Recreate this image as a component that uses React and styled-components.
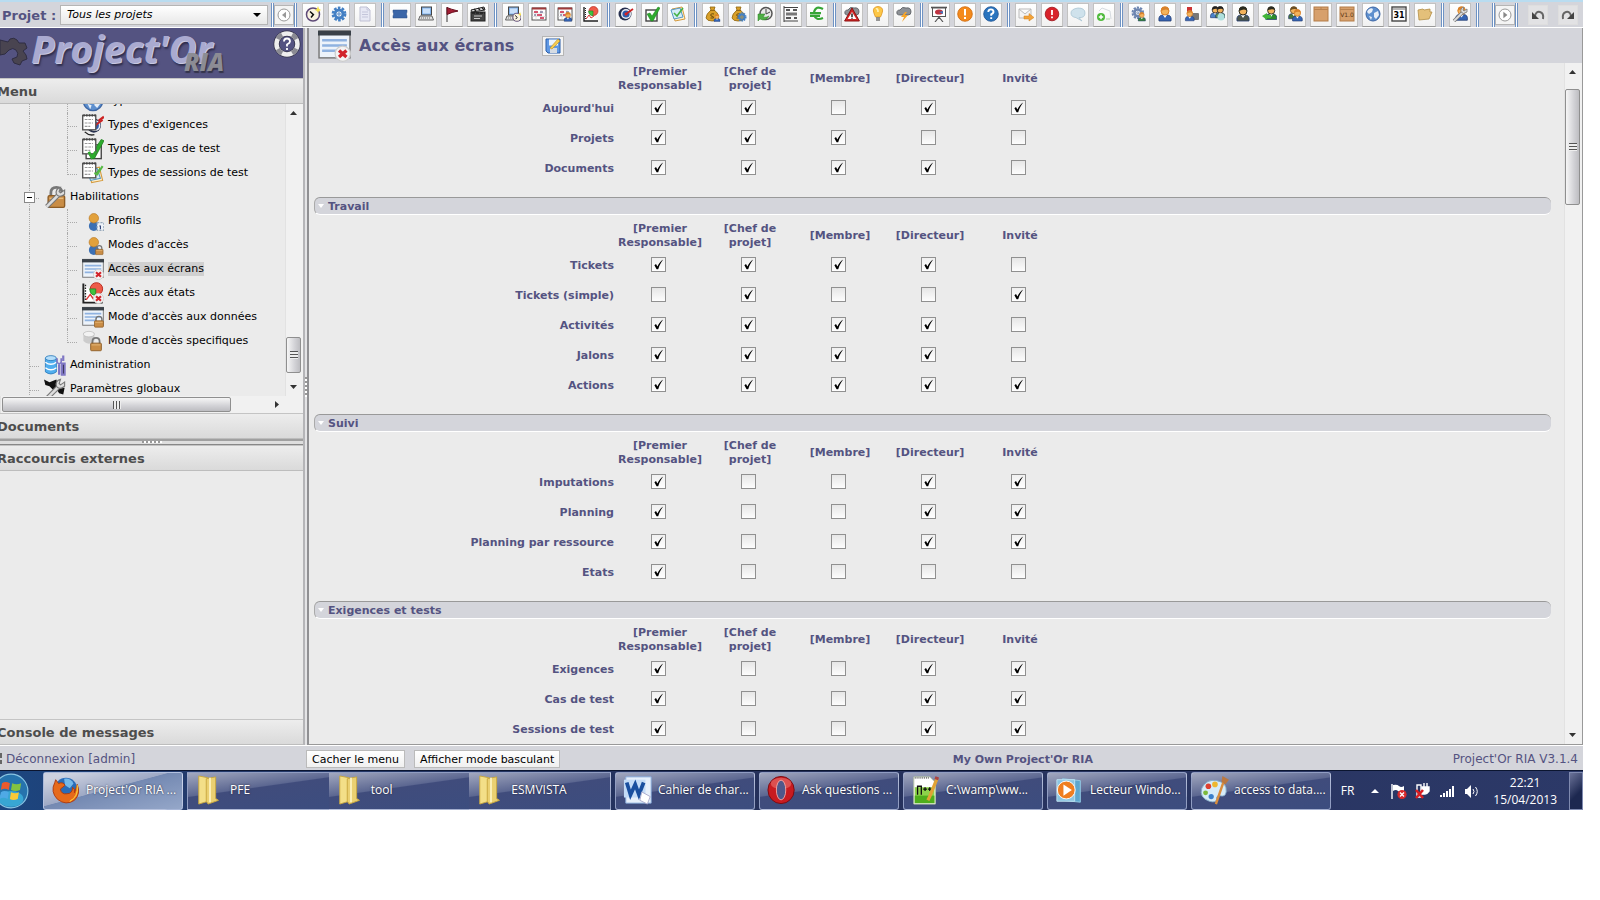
import { useState } from "react";
import styled, { createGlobalStyle } from "styled-components";

const GlobalStyle = createGlobalStyle`
  * {
    box-sizing: border-box;
  }
  body {
    margin: 0;
    background: #fff;
    font-family: Verdana, "DejaVu Sans", sans-serif;
    font-size: 11px;
    color: #000;
  }
  button, select {
    font-family: inherit;
    font-size: inherit;
  }
`;

const Screen = styled.div`
  display: flex;
  flex-direction: column;
  height: calc(100vh - 90px);
  margin-right: 17px;
  background: #d4d5db;
  overflow: hidden;
`;

/* top toolbar */

const Toolbar = styled.header`
  display: flex;
  align-items: center;
  flex: 0 0 28px;
  padding: 0 5px 0 2px;
  border-top: 2px solid #b9dcf0;
  border-bottom: 1px solid #fff;
`;

const ProjectLabel = styled.label`
  width: 58px;
  padding-top: 2px;
  font-size: 13px;
  font-weight: bold;
  color: #545381;
  white-space: nowrap;
`;

const SelectBox = styled.div`
  position: relative;
  width: 208px;
  margin-right: 3px;

  &::after {
    content: "";
    position: absolute;
    right: 7px;
    top: 8px;
    border: 4px solid transparent;
    border-top-color: #000;
    pointer-events: none;
  }
`;

const ProjectSelect = styled.select`
  display: block;
  width: 100%;
  height: 20px;
  padding: 0 6px;
  appearance: none;
  border: 1px solid #b5b5b5;
  border-radius: 0;
  background: linear-gradient(#fff, #e8e8e8);
  font-style: italic;
  color: #000;
`;

const Separator = styled.span`
  flex: 0 0 3px;
  height: 24px;
  margin: 0 ${(props) => (props.$tight ? "0" : "5px")};
  border-left: 1px solid #6f93c4;
  border-right: 1px solid #6f93c4;
  background: #fff;
`;

const ToolGroup = styled.div`
  display: flex;
  gap: 4px;
`;

const ToolButton = styled.button`
  display: flex;
  align-items: flex-start;
  flex: 0 0 22px;
  height: 24px;
  padding: 2px;
  border: 1px solid #c2c2c2;
  border-bottom-color: #999;
  background: linear-gradient(#fff, #f1f1f1);
`;

const SmallButton = styled(ToolButton)`
  flex-basis: ${(props) => (props.$wide ? "22px" : "20px")};
  height: 20px;
  padding: 1px;
  border-color: ${(props) => (props.$flat ? "#dedede" : "#b5b5b5")};
  background: ${(props) => (props.$flat ? "#e2e2e4" : "#f4f4f4")};
  justify-content: center;
`;

const Spacer = styled.span`
  flex: ${(props) => (props.$width ? `0 0 ${props.$width}px` : "1")};
`;

/* body */

const Body = styled.div`
  display: flex;
  flex: 1;
  min-height: 0;
`;

const Side = styled.aside`
  display: flex;
  flex-direction: column;
  flex: 0 0 303px;
  min-height: 0;
  background: #ebebeb;
`;

const Logo = styled.div`
  position: relative;
  display: flex;
  align-items: center;
  flex: 0 0 50px;
  background: #545381;
  overflow: hidden;
`;

const LogoName = styled.span`
  margin: 0 0 10px 3px;
  font-family: "Open Sans", sans-serif;
  font-size: 38px;
  font-weight: 700;
  font-style: italic;
  line-height: 40px;
  color: #aaaad0;
  text-shadow: 1px 1px 0 #c8c8e2, 2px 3px 2px #2e2d4c;
`;

const LogoSuffix = styled.span`
  position: absolute;
  left: 184px;
  top: 22px;
  font-family: "Open Sans", sans-serif;
  font-size: 24px;
  font-weight: 800;
  line-height: 24px;
  color: #8c8c94;
  font-style: italic;
  text-shadow: 1px 2px 1px #34344a;
`;

const HelpButton = styled.button`
  position: absolute;
  right: 2px;
  top: 2px;
  padding: 0;
  border: 0;
  background: none;
`;

const PaneTitle = styled.button`
  flex: 0 0 26px;
  padding: 0;
  border: 0;
  border-top: 1px solid #c4c4c4;
  border-bottom: 1px solid #bdbdbd;
  background: linear-gradient(#ededed, #dadada);
  font-size: 13px;
  font-weight: bold;
  color: #4d4d4d;
  text-align: left;
  text-indent: -3px;
  overflow: hidden;
`;

const PaneSplitter = styled.div`
  flex: 0 0 6px;
  border-top: 2px solid #a0a0a0;
  border-bottom: 1px solid #888;
  background: #dedede;

  &::before {
    content: "";
    display: block;
    width: 20px;
    height: 2px;
    margin: 0 auto;
    background: repeating-linear-gradient(90deg, #999 0 2px, #fff 2px 4px);
  }
`;

const EmptyPane = styled.div`
  flex: 1;
`;

const TreePane = styled.nav`
  display: flex;
  flex: 0 0 292px;
  overflow: hidden;
`;

const TreeView = styled.div`
  flex: 1;
  overflow: hidden;
`;

const TreeList = styled.ul`
  margin: -15px 0 0;
  padding: 0 0 0 29px;
  list-style: none;
`;

const TreeRow = styled.li`
  display: flex;
  align-items: center;
  height: 24px;
  white-space: nowrap;

  svg {
    flex: none;
    margin-right: 4px;
  }
`;

const Guide = styled.span`
  flex: 0 0 38px;
  align-self: stretch;
  border-left: 1px dotted #aaa;
`;

const Branch = styled.span`
  position: relative;
  flex: 0 0 15px;
  align-self: stretch;

  &::before {
    content: "";
    position: absolute;
    left: 0;
    top: 0;
    height: ${(props) => (props.$last ? "50%" : "100%")};
    border-left: 1px dotted #aaa;
  }
  &::after {
    content: "";
    position: absolute;
    left: 0;
    top: 13px;
    width: 10px;
    border-top: 1px dotted #aaa;
  }
`;

const Expander = styled.button`
  position: absolute;
  z-index: 1;
  left: -5px;
  top: 7px;
  width: 11px;
  height: 11px;
  padding: 0;
  border: 1px solid #888;
  background: linear-gradient(#000, #000) center / 5px 1px no-repeat, #fff;
`;

const TreeLink = styled.a`
  line-height: 14px;
  color: #000;
  text-decoration: none;
  background: ${(props) => (props.$selected ? "#d0d0d0" : "none")};
`;

const Scrollbar = styled.div`
  display: flex;
  flex-direction: ${(props) => (props.$across ? "row" : "column")};
  align-items: center;
  flex: 0 0 ${(props) => (props.$across ? "17px" : "18px")};
  padding-right: ${(props) => (props.$across ? "0" : "2px")};
  background: #f1f1f1;
  border-left: 1px solid #e2e2e2;
`;

const TrackGap = styled.span`
  flex: ${(props) => props.$grow};
`;

const Arrow = styled.span`
  flex: none;
  width: ${(props) => (props.$dir === "right" ? "4px" : "7px")};
  height: ${(props) => (props.$dir === "right" ? "7px" : "4px")};
  margin: ${(props) => (props.$dir === "right" ? "0 5px" : "7px 0")};
  background: #333;
  clip-path: ${(props) =>
    ({
      up: "polygon(0 100%, 50% 0, 100% 100%)",
      down: "polygon(0 0, 100% 0, 50% 100%)",
      right: "polygon(0 0, 100% 50%, 0 100%)",
    })[props.$dir]};
`;

const Thumb = styled.span`
  display: flex;
  align-items: center;
  justify-content: center;
  flex: 0 0 ${(props) => props.$size}px;
  width: 15px;
  height: 15px;
  border: 1px solid #8f8f8f;
  border-radius: 2px;
  background: linear-gradient(${(props) => (props.$across ? "180deg" : "90deg")}, #f6f6f6, #d2d2d6 60%, #bdbdc1);

  &::before {
    content: "";
    width: 8px;
    height: 8px;
    background: repeating-linear-gradient(${(props) => (props.$across ? "90deg" : "180deg")}, #555 0 1px, #eee 1px 3px);
  }
`;

const Gutter = styled.div`
  display: flex;
  align-items: center;
  justify-content: center;
  flex: 0 0 6px;
  border-left: 2px solid #b5b5b8;
  border-right: 2px solid #909093;
  background: #e4e4e6;

  &::before {
    content: "";
    width: 2px;
    height: 20px;
    background: repeating-linear-gradient(#999 0 2px, #fff 2px 4px);
  }
`;

const Main = styled.main`
  display: flex;
  flex-direction: column;
  flex: 1;
  min-width: 0;
  border-right: 1px solid #999;
  border-bottom: 1px solid #999;
  background: #ebebeb;
`;

const MainHeader = styled.div`
  display: flex;
  align-items: center;
  flex: 0 0 35px;
  padding-left: 9px;
  background: #d4d5db;
`;

const MainTitle = styled.h1`
  margin: 0 28px 0 8px;
  font-size: 16px;
  font-weight: bold;
  color: #545381;
`;

const MainScroll = styled.div`
  display: flex;
  flex: 1;
  min-height: 0;
`;

const Sections = styled.div`
  flex: 1;
  padding: 2px 13px 0 5px;
  overflow: hidden;
`;

const SectionBar = styled.h2`
  display: flex;
  align-items: center;
  gap: 4px;
  height: 18px;
  margin: 14px 0 7px;
  padding-left: 3px;
  border-top: 1px solid #999;
  border-left: 1px solid #aaa;
  border-bottom: 1px solid #fff;
  border-radius: 6px;
  background: #d4d5db;
  font-size: 11px;
  font-weight: bold;
  color: #545381;

  &::before {
    content: "";
    width: 6px;
    height: 4px;
    background: #fff;
    clip-path: polygon(0 0, 100% 0, 50% 100%);
  }
`;

const RightsTable = styled.table`
  table-layout: fixed;
  width: 751px;
  border-collapse: collapse;
  font-weight: bold;
  color: #545381;

  th, td {
    padding: 0;
  }
`;

const HeadCell = styled.th`
  width: ${(props) => (props.$label ? "301px" : "90px")};
  height: 28px;
  line-height: 14px;
  text-align: center;
`;

const RowHead = styled.th`
  height: 30px;
  text-align: right;

  && {
    padding-right: 1px;
  }
`;

const CheckCell = styled.td`
  text-align: center;
  line-height: 0;

  && {
    padding: 0 3px 2px 0;
  }
`;

const CheckBox = styled.input.attrs({ type: "checkbox" })`
  width: 15px;
  height: 15px;
  margin: 0;
  appearance: none;
  border: 1px solid #909090;
  background: linear-gradient(#e6e6e6, #fdfdfd);

  &:checked {
    background: url("data:image/svg+xml,%3Csvg xmlns='http://www.w3.org/2000/svg' viewBox='0 0 13 13'%3E%3Cpath d='M2.4 7.2L4 6L5.4 8.6C7 5.4 8.6 3.2 11.2 1.6C8.8 4.6 7.6 7.2 6.2 11.2H4.6Z' fill='%23000'/%3E%3C/svg%3E") center / 13px 13px no-repeat,
      linear-gradient(#f0f0f0, #fff);
  }
`;

/* status bar */

const StatusBar = styled.footer`
  display: grid;
  grid-template-columns: 306px 4fr auto 3fr;
  align-items: center;
  flex: 0 0 25px;
  padding: 2px 5px 0 0;
  border-top: 1px solid #fff;
  color: #545381;
`;

const LogoutLink = styled.a`
  display: flex;
  align-items: center;
  gap: 4px;
  color: #545381;
  font-size: 12px;
  text-decoration: none;
`;

const StatusButtons = styled.div`
  display: flex;
  gap: 9px;
`;

const StatusButton = styled.button`
  height: 18px;
  padding: 0 5px;
  border: 1px solid #bbb;
  background: linear-gradient(#fff, #f0f0f0);
  color: #000;
  white-space: nowrap;
`;

const Version = styled.span`
  font-size: 12px;
  text-align: right;
`;

/* windows taskbar */

const Taskbar = styled.div`
  display: flex;
  align-items: center;
  gap: 4px;
  flex: 0 0 40px;
  border-top: 1px solid #0b1530;
  background: linear-gradient(90deg, #1c4680, #233a6c 12%, #25305a 50%, #2c3968);
  font-family: "Open Sans", "Noto Sans", sans-serif;
  font-size: 12px;
  color: #fff;
`;

const StartButton = styled.button`
  flex: 0 0 39px;
  height: 38px;
  padding: 0;
  border: 0;
  background: none;
  overflow: hidden;

  svg {
    display: block;
    margin-left: -7px;
  }
`;

const TaskButton = styled.button`
  display: flex;
  align-items: center;
  gap: 5px;
  flex: 0 0 140px;
  height: 38px;
  padding: 0 0 2px 7px;
  border: 1px solid rgba(200, 212, 240, 0.6);
  border-radius: 3px;
  background: ${(props) =>
    props.$active
      ? "linear-gradient(165deg, #cdd2e0 10%, #9ea9c5 45%, #7489b2 46%, #95a7c9)"
      : "linear-gradient(172deg, #a2a8bf, #5c6791 42%, #404c7c 44%, #3c4d7f)"};
  color: #fff;
  white-space: nowrap;
  text-shadow: 0 0 2px #223;
`;

const FolderGroup = styled.div`
  display: flex;
  flex: 0 0 424px;
`;

const FolderButton = styled(TaskButton)`
  flex: 1;
  border-width: 1px 0;
  border-radius: 0;

  &:first-child {
    border-left-width: 1px;
  }
  &:last-child {
    border-right-width: 1px;
  }
`;

const Tray = styled.div`
  display: flex;
  align-items: center;
  flex: 1;
  justify-content: flex-end;
  gap: 9px;
`;

const Language = styled.span`
  margin-right: 7px;
`;

const Clock = styled.div`
  margin: 0 3px 0 4px;
  text-align: center;
  line-height: 17px;
`;

const ShowDesktop = styled.button`
  width: 14px;
  height: 38px;
  padding: 0;
  border: 1px solid #7f8ab0;
  background: linear-gradient(135deg, #6b7398, #1d2850 60%);
`;

/* icon parts, all drawn on a 16 unit square */

const Person = ({ x = 0, y = 0, s = 1, coat = "#3565b5", hair = "#d9822b", skin = "#f3b35c" }) => (
  <g transform={`translate(${x} ${y}) scale(${s})`}>
    <path d="M2 15Q1 9 6 9H10Q15 9 14 15Z" fill={coat} stroke="#233a70" strokeWidth=".8" />
    <path d="M6 9L8 12L10 9Z" fill="#fff" />
    <circle cx="8" cy="5" r="4" fill={skin} stroke={hair} />
    <path d="M4 5Q4 0 8 .5Q12 0 12 5Q10 2 4 5" fill={hair} />
  </g>
);

const Gear = ({ x = 0, y = 0, s = 1, color = "#4480c4" }) => (
  <g transform={`translate(${x} ${y}) scale(${s})`} fill="none" stroke={color}>
    <circle cx="8" cy="8" r="6.2" strokeWidth="2.4" strokeDasharray="2.6 1.3" />
    <circle cx="8" cy="8" r="4" strokeWidth="3" />
    <circle cx="8" cy="8" r="1.2" />
  </g>
);

const Lock = ({ x = 0, y = 0, s = 1 }) => (
  <g transform={`translate(${x} ${y}) scale(${s})`}>
    <path d="M4 8V5Q4 1 8 1T12 5V8" fill="none" stroke="#777" strokeWidth="2" />
    <rect x="2" y="7" width="12" height="8.5" rx="1" fill="#c98d46" stroke="#8c5c26" />
    <path d="M3 9H13" stroke="#e9bb7c" />
  </g>
);

const Wrench = () => (
  <>
    <path d="M2 15L11 6" stroke="#777" strokeWidth="3.4" />
    <path d="M2 15L11 6" stroke="#ddd" strokeWidth="1.8" />
    <path d="M12 1Q8 2 9 6Q11 9 15 6V3L12 5L11 4Z" fill="#ddd" stroke="#777" strokeWidth=".8" />
  </>
);

const Sheet = () => (
  <>
    <rect x=".5" y="1" width="9.5" height="10.5" fill="#fff" stroke="#555" />
    <path d="M1 1H10" stroke="#444" strokeWidth="1.6" strokeDasharray="1 1" />
    <path d="M2 4H8M2 6.5H8M2 9H6" stroke="#999" strokeWidth=".8" strokeDasharray="2 .6" />
  </>
);

const ScreenPane = () => (
  <>
    <rect x=".5" y="1" width="15" height="13" fill="#edf3fa" stroke="#777" strokeWidth=".7" />
    <path d="M0 2H16" stroke="#394048" strokeWidth="2.4" />
    <path d="M2 5.5H14M2 8H14M2 10.5H10" stroke="#8fb2e0" strokeWidth="1.2" />
  </>
);

const RedCross = () => (
  <>
    <circle cx="12" cy="12" r="3.7" fill="#f3f3f3" stroke="#ccc" strokeWidth=".6" />
    <path d="M10.2 10.4L13.8 13.6M13.8 10.4L10.2 13.6" stroke="#d2232a" strokeWidth="1.6" />
  </>
);

const Globe = () => (
  <>
    <circle cx="8" cy="8" r="7" fill="#5d8fce" stroke="#3d66a4" />
    <path d="M3 4Q6 1 8 3L7 6L4 8L2 6ZM9 7L13 5L14 9L11 13L9 11Z" fill="#e6eef8" />
    <path d="M4 10L7 11L6 14Z" fill="#e6eef8" />
  </>
);

const Report = () => (
  <>
    <path d="M1 1V15H15" stroke="#222" strokeWidth="1.4" fill="#fff" />
    <path d="M2.5 2V14" stroke="#222" strokeDasharray="1 1" />
    <path d="M3 13L6 9L8 12L11 10" stroke="#d33" fill="none" />
    <circle cx="10.5" cy="5" r="4.5" fill="#ee5b48" stroke="#b92c21" strokeWidth=".7" />
    <path d="M10 5H5.6Q6 10 10 9.5Z" fill="#40c340" stroke="#248424" strokeWidth=".6" />
  </>
);

const ClockFace = () => (
  <>
    <circle cx="8" cy="8.5" r="6.5" fill="#faf3df" stroke="#5e4a78" strokeWidth="1.5" />
    <path d="M5 5.5L8.4 8.6L6 11.5" stroke="#111" strokeWidth="1.5" fill="none" />
    <path d="M13 0L14 2.8L16 4L14 5L13 7L12 5L10 4L12 2.8Z" fill="#f6e24a" />
  </>
);

const MoneyBag = () => (
  <>
    <path d="M5 1H10L9 4Q15 8 13 13Q12 15 7 15T1 12Q1 8 6 4Z" fill="#d9a029" stroke="#8e6412" strokeWidth=".8" />
    <path d="M5 4.4H10" stroke="#8e6412" />
    <path d="M9 8Q5 7 6 10Q9 10 8.5 12L5.5 12" stroke="#6e4b0b" fill="none" />
  </>
);

const Computer = () => (
  <>
    <rect x="3.5" y="1" width="10" height="8" fill="#82b5ef" stroke="#444" />
    <rect x="5" y="2.5" width="7" height="5" fill="#c9e0fa" />
    <path d="M2 10H14L15.5 14H.5Z" fill="#ddd" stroke="#666" />
    <path d="M3 12H13" stroke="#777" strokeDasharray="1 1" />
  </>
);

const Cloud = () => (
  <path d="M4 9Q0 9 1 5.5Q2 3.5 4 4Q6 0 10 2Q15 1 15 6Q15 9 12 9Z" fill="#8d9196" stroke="#55595e" strokeWidth=".8" />
);

const PlanGrid = () => (
  <>
    <rect x="1" y="2" width="14" height="12" fill="#fff" stroke="#555" />
    <path d="M1 2.5H15" stroke="#a03a3a" strokeWidth="2" />
    <path d="M5 4V14M10 4V14M1 7H15M1 10.5H15" stroke="#ccc" strokeWidth=".6" />
    <path d="M3 6H7M6 9H11M9 12H13" stroke="#c24" strokeWidth="1.4" />
    <path d="M9 6H12M3 9H5" stroke="#447" strokeWidth="1.2" />
  </>
);

const Target = () => (
  <>
    <circle cx="7" cy="8" r="6.5" fill="#27304f" />
    <circle cx="8" cy="8" r="5" fill="#e9edf5" />
    <circle cx="8" cy="8" r="3.6" fill="#2d5cab" />
    <circle cx="8" cy="8" r="1.5" fill="#d22" />
    <path d="M8 8L15 3" stroke="#c22" strokeWidth="1.8" />
  </>
);

const GreenTick = () => (
  <path d="M3 8L6 7L8 10L14 1L16 2L9 15H7Z" fill="#2dab2d" stroke="#177a17" strokeWidth=".5" />
);

const Notes = () => (
  <>
    <path d="M2 3L12 1L15 13L5 15Z" fill="#fff1ce" stroke="#d39a3f" />
    <path d="M1 4L10 2L13 11L4 13Z" fill="#d4ecf8" stroke="#5799c4" />
    <path d="M4 7L7 10L13 2" stroke="#45b245" strokeWidth="1.6" fill="none" />
  </>
);

const ICONS = {
  today: <ClockFace />,
  project: <Gear />,
  document: (
    <>
      <path d="M3 1H10L13 4V15H3Z" fill="#e7e8f4" stroke="#bfc0d3" />
      <path d="M10 1V4H13M5 6H11M5 8.5H11M5 11H11" stroke="#c4c5da" fill="none" />
    </>
  ),
  ticket: <path d="M1 4H15V6Q13.6 8 15 10V12H1V10Q2.4 8 1 6Z" fill="#3b66a8" stroke="#2b4c84" strokeWidth=".5" />,
  activity: <Computer />,
  milestone: (
    <>
      <path d="M3 1V16" stroke="#555" strokeWidth="1.2" />
      <path d="M3 1.5Q6 3 14 5Q8 6 3 8.5Z" fill="#a31f35" stroke="#68101f" />
    </>
  ),
  action: (
    <>
      <rect x="1" y="6" width="14" height="9" fill="#444" stroke="#222" />
      <path d="M1 4L14 1L15 4L2 6Z" fill="#ddd" stroke="#222" />
      <path d="M4 3L6 5M8 2L10 4M12 1.6L14 4M2 7H15" stroke="#222" strokeWidth="1.4" strokeDasharray="3 1" />
      <path d="M4 10H12M4 12.5H10" stroke="#ccc" />
    </>
  ),
  work: (
    <>
      <Computer />
      <g transform="translate(7 6) scale(.62)">
        <ClockFace />
      </g>
    </>
  ),
  planning: <PlanGrid />,
  resourcePlanning: (
    <>
      <PlanGrid />
      <Person x={6} y={6} s={0.62} />
    </>
  ),
  report: <Report />,
  requirement: <Target />,
  testCase: (
    <>
      <rect x="2" y="4" width="11" height="11" fill="#fff" stroke="#444" strokeWidth="1.4" />
      <GreenTick />
    </>
  ),
  testSession: <Notes />,
  individualExpense: (
    <>
      <MoneyBag />
      <Person x={8} y={8} s={0.5} />
    </>
  ),
  projectExpense: (
    <>
      <MoneyBag />
      <Gear x={6} y={6} s={0.62} />
    </>
  ),
  term: (
    <>
      <circle cx="9" cy="7.5" r="6" fill="#e8e8e8" stroke="#555" strokeWidth="1.5" />
      <path d="M9 3V8L13 6" stroke="#444" fill="none" />
      <path d="M1 8H8L6 11Q9 12 12 10Q9 16 3 13L1 15Z" fill="#4fae45" stroke="#267e1e" strokeWidth=".5" />
    </>
  ),
  bill: (
    <>
      <path d="M1 0V16M1 1.5H15M1 15H15" stroke="#444" fill="none" />
      <path d="M3 4H7M10 4H14M3 12H8M11 12H14" stroke="#222" strokeWidth="1.6" />
      <path d="M3 8H14" stroke="#777" strokeWidth="3" />
    </>
  ),
  payment: (
    <path d="M14 3Q7 -1 5 6M5 9Q7 15 14 12M1 7.2H12M1 9.8H11" stroke="#35a535" strokeWidth="2.2" fill="none" />
  ),
  risk: (
    <>
      <Cloud />
      <path d="M8 2L15.4 15H.6Z" fill="#d02424" stroke="#8b1111" />
      <path d="M8 6L12.4 13H3.6Z" fill="#fff" />
      <path d="M8 7.5V11M8 11.7V12.8" stroke="#111" strokeWidth="1.4" />
    </>
  ),
  opportunity: (
    <>
      <path d="M8 .5Q13 1 12.6 5Q12 8 10.5 11H5.5Q4 8 3.4 5Q3 1 8 .5Z" fill="#fdc746" stroke="#dd9522" strokeWidth=".8" />
      <path d="M6 3Q8 2 8 6" stroke="#fff3b8" strokeWidth="1.6" fill="none" />
      <path d="M6 12H10M6 14H10" stroke="#777" strokeWidth="1.5" />
    </>
  ),
  issue: (
    <>
      <Cloud />
      <path d="M9 6L5 11H8L6 16L12 9H9L11 6Z" fill="#f7a529" />
    </>
  ),
  meeting: (
    <>
      <path d="M0 1.5H16" stroke="#555" strokeWidth="1.6" />
      <rect x="1.5" y="2" width="13" height="8.5" fill="#fff" stroke="#555" />
      <path d="M8 10V13M8 11L4 16M8 11L12 16" stroke="#555" strokeWidth="1.2" />
      <ellipse cx="8" cy="6" rx="4" ry="2.6" fill="#bf3340" />
      <path d="M8 6L12 5V8Z" fill="#4575bd" />
    </>
  ),
  decision: (
    <>
      <circle cx="8" cy="8" r="7.3" fill="#f48a1c" stroke="#cd6709" strokeWidth=".8" />
      <path d="M8 3V9.4M8 11V13" stroke="#fff" strokeWidth="2" />
    </>
  ),
  question: (
    <>
      <circle cx="8" cy="8" r="7.3" fill="#2974be" stroke="#1c5190" strokeWidth=".8" />
      <path d="M5.3 6Q5.5 3.2 8 3.4T10.5 6Q10.3 7.3 8.2 8.4V9.8M8.2 11.2V13" stroke="#fff" strokeWidth="1.9" fill="none" />
    </>
  ),
  mail: (
    <>
      <path d="M1 3H13V12H1ZL7 8L13 3" fill="#f4f4f4" stroke="#bbb" />
      <path d="M6 10H11V7.5L16 11.5L11 15V13H6Z" fill="#f2a33a" stroke="#d37f16" strokeWidth=".5" />
    </>
  ),
  alert: (
    <>
      <circle cx="8" cy="8" r="6.8" fill="#d8222b" stroke="#9c1017" strokeWidth=".8" />
      <path d="M8 4V9M8 10.4V12.2" stroke="#fff" strokeWidth="1.8" />
    </>
  ),
  message: (
    <path d="M8 2Q15 2 15 7T9 11.6L12 15L6 11.6Q1 11 1 7T8 2Z" fill="#cfe2ec" stroke="#a9c5d3" strokeWidth=".8" />
  ),
  importData: (
    <>
      <path d="M6 2L14 5M14 5L15 13M3 5L6 2" stroke="#d6dbe0" fill="none" />
      <circle cx="5" cy="11" r="4" fill="#4fba3c" />
      <path d="M5 8.8V13.2M2.8 11H7.2" stroke="#fff" strokeWidth="1.5" />
      <path d="M10 13H14" stroke="#a8d79f" />
    </>
  ),
  projectTeam: (
    <>
      <Gear color="#6c85b0" s={0.85} />
      <Person x={6} y={6} s={0.6} coat="#38823a" />
    </>
  ),
  user: <Person />,
  userJob: (
    <>
      <rect x="8" y="7" width="8" height="7" rx="1" fill="#777" />
      <path d="M4 1H9V6H4Z" fill="#c33" />
      <Person x={1} y={4} s={0.72} />
    </>
  ),
  contacts: (
    <>
      <Person s={0.78} hair="#222" coat="#4a82c8" />
      <Person x={5} s={0.78} hair="#222" coat="#5a8a5a" />
      <circle cx="12" cy="11" r="3.5" fill="#aee0de" />
    </>
  ),
  resource: <Person hair="#2b2b20" coat="#4b554b" />,
  affectation: (
    <>
      <Person x={3} s={0.9} hair="#2b2b20" coat="#2b8a2b" />
      <path d="M1 10L6 7V9H10V12H6V14Z" fill="#41b63a" />
    </>
  ),
  team: (
    <>
      <Person s={0.85} hair="#6c4f24" coat="#49753d" />
      <Person x={4} y={3} s={0.8} />
    </>
  ),
  product: (
    <>
      <rect x="1" y="1" width="14" height="14" fill="#d7a06c" stroke="#b37c48" />
      <path d="M1 3.5H15M8 1V3.5" stroke="#b98350" />
    </>
  ),
  version: (
    <>
      <rect x="1" y="1" width="14" height="14" fill="#d7a06c" stroke="#b37c48" />
      <path d="M1 3.5H15" stroke="#b98350" />
      <text x="8" y="11" textAnchor="middle" fontSize="6" fontFamily="DejaVu Sans" fill="#5b3412">V1.0</text>
    </>
  ),
  context: <Globe />,
  calendar: (
    <>
      <rect x="1" y="1" width="14" height="14" fill="#fff" stroke="#444" strokeWidth="1.4" />
      <path d="M2 3H14" stroke="#999" strokeWidth="1.4" />
      <text x="8" y="11.5" textAnchor="middle" fontSize="8" fontWeight="bold" fontFamily="DejaVu Sans">31</text>
    </>
  ),
  folder: (
    <path d="M1 4L6 3L7 4L13 3V6L15 6L12 13L2 14Z" fill="#e4c07a" stroke="#b38e46" strokeWidth=".8" />
  ),
  parameter: (
    <>
      <Person x={2} s={0.95} />
      <Wrench />
    </>
  ),
  typeGlobe: <Globe />,
  typeRequirement: (
    <>
      <g transform="translate(3 2) scale(.8)">
        <Target />
      </g>
      <path d="M2 13Q5 16 9 15" stroke="#222" fill="none" />
      <Sheet />
      <path d="M12 5L16 2" stroke="#c22" strokeWidth="1.8" />
    </>
  ),
  typeTestCase: (
    <>
      <rect x="3" y="5" width="11" height="10" fill="#fff" stroke="#444" />
      <GreenTick />
      <Sheet />
      <path d="M5 10L7 14L10 10" stroke="#2dab2d" strokeWidth="2" fill="none" />
    </>
  ),
  typeTestSession: (
    <>
      <g transform="translate(3 3) scale(.8)">
        <Notes />
      </g>
      <Sheet />
      <path d="M9 8L11 9L15 3" stroke="#57b944" strokeWidth="1.5" fill="none" />
    </>
  ),
  habilitation: (
    <>
      <Lock x={1} />
      <Wrench />
    </>
  ),
  profile: (
    <g transform="translate(3 2) scale(.8)">
      <circle cx="7" cy="12" r="4.5" fill="#3c70b4" />
      <circle cx="7" cy="5" r="4.3" fill="#e2a13c" stroke="#b87924" strokeWidth=".6" />
      <path d="M10 9H16V16H10Z" fill="#eef2f8" stroke="#9ab" strokeDasharray="2 1" />
      <path d="M12 12H13V15" stroke="#347" fill="none" />
    </g>
  ),
  accessMode: (
    <>
      <g transform="translate(3 2) scale(.8)">
        <circle cx="7" cy="12" r="4.5" fill="#3c70b4" />
        <circle cx="7" cy="5" r="4.3" fill="#e2a13c" stroke="#b87924" strokeWidth=".6" />
      </g>
      <Lock x={9} y={8} s={0.45} />
    </>
  ),
  screenAccess: (
    <>
      <ScreenPane />
      <RedCross />
    </>
  ),
  reportAccess: (
    <>
      <Report />
      <RedCross />
    </>
  ),
  dataAccess: (
    <>
      <ScreenPane />
      <Lock x={8} y={7} s={0.54} />
    </>
  ),
  specificAccess: (
    <>
      <path d="M1 2H9V8Q5 12 1 8Z" fill="#ccc" />
      <ellipse cx="5" cy="3" rx="4" ry="2" fill="#f2f2f2" stroke="#bbb" strokeWidth=".5" />
      <Lock x={5} y={5} s={0.65} />
    </>
  ),
  admin: (
    <>
      <path d="M1 3V13Q5 16 9 13V3" fill="#51aeee" stroke="#2779bb" strokeWidth=".6" />
      <path d="M1 6Q5 9 9 6M1 10Q5 13 9 10" stroke="#fff" fill="none" />
      <ellipse cx="5" cy="3" rx="4" ry="1.8" fill="#b5defa" stroke="#2779bb" strokeWidth=".6" />
      <path d="M11 8V15M14 1V5M13 7H15V15H13Z" stroke="#7f77c4" strokeWidth="1.6" />
      <path d="M9.5 3V6L11 7.5L12.5 6V3" stroke="#7f77c4" strokeWidth="1.2" fill="none" />
    </>
  ),
  globalParameter: (
    <>
      <path d="M0 1L4 3L9 1L10 5L7 9L4 6L1 5ZM9 8L15 7L14 12L11 11Z" fill="#111" />
      <Wrench />
    </>
  ),
  save: (
    <>
      <path d="M1 1H15V15H3L1 13Z" fill="#5f98e4" stroke="#2d5ea9" />
      <rect x="4" y="1.5" width="9" height="6" fill="#eaf3ff" />
      <rect x="5" y="10" width="7" height="5" fill="#d5dbe3" />
      <path d="M5 10L13 1L15 3L7 11Z" fill="#f7cd51" stroke="#bc8b21" strokeWidth=".6" />
    </>
  ),
  back: (
    <>
      <circle cx="8" cy="8" r="6" fill="#fff" stroke="#999" />
      <path d="M10 4.8V11.2L6 8Z" fill="#999" />
    </>
  ),
  play: (
    <>
      <circle cx="8" cy="8" r="6" fill="#fff" stroke="#999" />
      <path d="M6.4 4.8V11.2L10.4 8Z" fill="#888" />
    </>
  ),
  undo: (
    <>
      <path d="M5 9Q6 4 10 5T13 12" stroke="#666" strokeWidth="2" fill="none" />
      <path d="M2 5V12H9Z" fill="#444" />
    </>
  ),
  redo: (
    <>
      <path d="M11 9Q10 4 6 5T3 12" stroke="#666" strokeWidth="2" fill="none" />
      <path d="M14 5V12H7Z" fill="#444" />
    </>
  ),
};

const Icon = ({ name, size = 16 }) => (
  <svg width={size} height={size} viewBox="0 0 16 16" aria-hidden="true">
    {ICONS[name]}
  </svg>
);

const Lifebuoy = () => (
  <svg width="28" height="28" viewBox="0 0 28 28" aria-hidden="true">
    <circle cx="14" cy="14" r="10.5" fill="none" stroke="#333248" strokeWidth="6" />
    <circle cx="14" cy="14" r="10.5" fill="none" stroke="#eee" strokeWidth="4.5" />
    <circle cx="14" cy="14" r="10.5" fill="none" stroke="#8b8b93" strokeWidth="4.5" strokeDasharray="6 10.5" strokeDashoffset="-5" />
    <path d="M11 11.5Q11 8.5 14 8.5T17 11.5Q17 13 14 14.5V16.5M14 18V20" stroke="#fff" strokeWidth="1.8" fill="none" />
  </svg>
);

const GearPiece = () => (
  <svg width="28" height="38" viewBox="0 0 28 38" aria-hidden="true">
    <path
      d="M0 6L4 7L8 8L10 5Q14 3 17 6L19 9H25L27 14L23 17L26 21L27 25L22 27L20 31L14 29L12 25L17 23Q19 19 16 16T9 16L5 20L0 21Z"
      fill="#494450"
      stroke="#2f2d42"
    />
  </svg>
);

const TASK_ICONS = {
  firefox: (
    <>
      <circle cx="16" cy="15" r="12" fill="#2a6cb8" />
      <path d="M14 4Q21 3 24 9L20 14L15 11Z" fill="#74b9ea" />
      <path d="M5 5L8 9Q13 7 15 11L10 15Q11 21 17 20Q23 20 23 13Q26 15 25 19L28 10Q32 20 25 27Q16 33 7 26Q-1 18 4 8Z" fill="#e66a1b" stroke="#ac3b11" />
      <path d="M28 11Q30 23 20 28Q29 24 28 11" fill="#f9c533" stroke="#f9c533" />
    </>
  ),
  word: (
    <>
      <path d="M3 2H30V30H3Z" fill="#e7f0fb" stroke="#8baede" />
      <path d="M1 5H24V24H1Z" fill="#c4dcf7" />
      <path d="M4 8L8 21L13 10L17 21L22 8" stroke="#194f9f" strokeWidth="4" fill="none" />
      <path d="M20 18L29 23L26 31L18 27Z" fill="#fff" stroke="#aac" />
    </>
  ),
  opera: (
    <>
      <ellipse cx="15" cy="16" rx="14" ry="14.5" fill="#c81b20" stroke="#7b0b10" />
      <ellipse cx="15" cy="9" rx="11" ry="6" fill="#ea7471" opacity=".6" />
      <ellipse cx="15" cy="16" rx="5" ry="10.5" fill="#4f588a" stroke="#f0a3a0" />
    </>
  ),
  notepad: (
    <>
      <path d="M3 2H20L26 8V31H3Z" fill="#fff" stroke="#b7c6a8" />
      <path d="M4 13H25V30H4Z" fill="#8dd34a" />
      <path d="M4 22H25V30H4Z" fill="#4fae1c" />
      <path d="M4 3H19" stroke="#777" strokeDasharray="1 1" strokeWidth="2" />
      <path d="M7 21V12H11V21M13 15H17M15 13V17M18 15H22M20 13V17" stroke="#111" strokeWidth="1.4" fill="none" />
      <path d="M28 3L20 23L18 27" stroke="#e1a335" strokeWidth="3.5" fill="none" />
      <path d="M28 2L27 5" stroke="#a44" strokeWidth="4" />
    </>
  ),
  player: (
    <>
      <path d="M8 4L27 6V29L8 27Z" fill="#5da6cd" stroke="#94cde6" />
      <path d="M2 5L21 5V28H2Z" fill="#8bc5e2" stroke="#c1e4f2" />
      <circle cx="12" cy="16" r="9.5" fill="#ef7e20" stroke="#fff" />
      <path d="M9 10L18 16L9 22Z" fill="#fff" />
    </>
  ),
  paint: (
    <>
      <path d="M3 14Q8 4 19 6T29 18Q28 24 22 22Q18 22 19 26Q18 30 11 28Q0 24 3 14Z" fill="#d6ebf7" stroke="#83abc9" />
      <circle cx="10" cy="12" r="3" fill="#dd4030" />
      <circle cx="17" cy="10" r="3" fill="#eeb72d" />
      <circle cx="7" cy="19" r="2.6" fill="#7cb93c" />
      <circle cx="13" cy="23" r="2.8" fill="#3b7fc9" />
      <path d="M27 5L18 31" stroke="#d98d3d" strokeWidth="2.6" />
      <path d="M25 1L32 5L28 10L24 7Z" fill="#b97842" />
    </>
  ),
  folder: (
    <>
      <path d="M4 1L14 3V28L4 31Z" fill="#f3df88" stroke="#c9a83f" />
      <path d="M12 4L22 2V25L25 27L14 31L12 28Z" fill="#ead071" stroke="#c9a83f" />
      <path d="M16 3V29" stroke="#fbf1bb" strokeWidth="2" />
    </>
  ),
  start: (
    <>
      <circle cx="16" cy="16" r="15" fill="#2673ad" stroke="#8ac6e4" />
      <ellipse cx="16" cy="23" rx="11" ry="7" fill="#42c1e8" opacity=".65" />
      <path d="M8 9Q11 7 15 9L14 15Q10 13 7 15Z" fill="#eb5a2c" />
      <path d="M17 9Q21 11 25 9L24 15Q20 17 16 15Z" fill="#84c341" />
      <path d="M7 17Q10 15 14 17L13 23Q9 21 6 23Z" fill="#4fa9e6" />
      <path d="M16 17Q20 19 23 17L22 23Q18 25 15 23Z" fill="#fac938" />
    </>
  ),
};

const TaskIcon = ({ name, size = 30 }) => (
  <svg width={size} height={size} viewBox="0 0 32 32" aria-hidden="true">
    {TASK_ICONS[name]}
  </svg>
);

const TrayIcons = () => (
  <svg width="110" height="20" viewBox="0 0 110 20" aria-hidden="true">
    <path d="M1 12L5 8L9 12Z" fill="#fff" />
    <path d="M22 3V18" stroke="#fff" strokeWidth="1.4" />
    <path d="M23 4Q27 3 29 5T34 5V11Q30 12 28 10T23 10Z" fill="#fff" />
    <circle cx="32" cy="13.5" r="4.6" fill="#d9292b" />
    <path d="M30 11.5L34 15.5M34 11.5L30 15.5" stroke="#fff" strokeWidth="1.3" />
    <path d="M47 4H51V16H47Z" stroke="#fff" strokeWidth="1.4" fill="none" />
    <path d="M52 6H59V10Q57 13 55 13H52ZM54 2V6M57 2V6" stroke="#fff" strokeWidth="1.4" fill="#fff" />
    <path d="M46 9L53 17M53 9L46 17" stroke="#d91e22" strokeWidth="2.6" />
    <path d="M71 16V14M74 16V12M77 16V10M80 16V8M83 16V5" stroke="#fff" strokeWidth="2" />
    <path d="M95 8H97L101 4V17L97 13H95Z" fill="#fff" />
    <path d="M103 8Q105 10.5 103 13M105.5 6Q109 10.5 105.5 15" stroke="#fff" fill="none" />
  </svg>
);

const toolGroups = [
  ["today", "project", "document"],
  ["ticket", "activity", "milestone", "action"],
  ["work", "planning", "resourcePlanning", "report"],
  ["requirement", "testCase", "testSession"],
  ["individualExpense", "projectExpense", "term", "bill", "payment"],
  ["risk", "opportunity", "issue"],
  ["meeting", "decision", "question"],
  ["mail", "alert", "message", "importData"],
  [
    "projectTeam", "user", "userJob", "contacts", "resource", "affectation",
    "team", "product", "version", "context", "calendar", "folder",
  ],
  ["parameter"],
];

const treeItems = [
  { label: "Types", icon: "typeGlobe", level: 2 },
  { label: "Types d'exigences", icon: "typeRequirement", level: 2 },
  { label: "Types de cas de test", icon: "typeTestCase", level: 2 },
  { label: "Types de sessions de test", icon: "typeTestSession", level: 2, last: true },
  { label: "Habilitations", icon: "habilitation", level: 1, open: true },
  { label: "Profils", icon: "profile", level: 2 },
  { label: "Modes d'accès", icon: "accessMode", level: 2 },
  { label: "Accès aux écrans", icon: "screenAccess", level: 2 },
  { label: "Accès aux états", icon: "reportAccess", level: 2 },
  { label: "Mode d'accès aux données", icon: "dataAccess", level: 2 },
  { label: "Mode d'accès specifiques", icon: "specificAccess", level: 2, last: true },
  { label: "Administration", icon: "admin", level: 1 },
  { label: "Paramètres globaux", icon: "globalParameter", level: 1 },
];

const profiles = ["[Premier Responsable]", "[Chef de projet]", "[Membre]", "[Directeur]", "Invité"];

// one digit per profile, 1 = access granted
const sections = [
  { title: "", rows: [["Aujourd'hui", "11011"], ["Projets", "11100"], ["Documents", "11110"]] },
  {
    title: "Travail",
    rows: [
      ["Tickets", "11110"],
      ["Tickets (simple)", "01001"],
      ["Activités", "11110"],
      ["Jalons", "11110"],
      ["Actions", "11111"],
    ],
  },
  {
    title: "Suivi",
    rows: [
      ["Imputations", "10011"],
      ["Planning", "10011"],
      ["Planning par ressource", "10011"],
      ["Etats", "10000"],
    ],
  },
  {
    title: "Exigences et tests",
    rows: [["Exigences", "10011"], ["Cas de test", "10011"], ["Sessions de test", "10011"]],
  },
];

const ToolSet = ({ group }) => (
  <>
    <ToolGroup>
      {group.map((name) => (
        <ToolButton key={name} aria-label={name}>
          <Icon name={name} />
        </ToolButton>
      ))}
    </ToolGroup>
    <Separator />
  </>
);

const Section = ({ title, rows }) => (
  <section>
    {title && <SectionBar>{title}</SectionBar>}
    <RightsTable>
      <thead>
        <tr>
          <HeadCell $label />
          {profiles.map((profile) => (
            <HeadCell key={profile} scope="col">{profile}</HeadCell>
          ))}
        </tr>
      </thead>
      <tbody>
        {rows.map(([label, rights]) => (
          <tr key={label}>
            <RowHead scope="row">{label}</RowHead>
            {profiles.map((profile, i) => (
              <CheckCell key={profile}>
                <CheckBox aria-label={`${label} ${profile}`} defaultChecked={rights[i] === "1"} />
              </CheckCell>
            ))}
          </tr>
        ))}
      </tbody>
    </RightsTable>
  </section>
);

const App = () => {
  const [selected, setSelected] = useState("Accès aux écrans");

  return (
    <>
      <GlobalStyle />
      <Screen>
        <Toolbar>
          <ProjectLabel htmlFor="project">Projet :</ProjectLabel>
          <SelectBox>
            <ProjectSelect id="project">
              <option>Tous les projets</option>
            </ProjectSelect>
          </SelectBox>
          <Separator $tight />
          <SmallButton aria-label="back"><Icon name="back" /></SmallButton>
          <Separator $tight />
          <Spacer $width={5} />
          {toolGroups.map((group) => (
            <ToolSet key={group[0]} group={group} />
          ))}
          <Spacer />
          <Separator $tight />
          <SmallButton aria-label="play"><Icon name="play" /></SmallButton>
          <Separator $tight />
          <Spacer $width={10} />
          <SmallButton $flat aria-label="undo"><Icon name="undo" /></SmallButton>
          <Spacer $width={10} />
          <SmallButton $flat aria-label="redo"><Icon name="redo" /></SmallButton>
        </Toolbar>

        <Body>
          <Side>
            <Logo>
              <GearPiece />
              <LogoName>Project'Or</LogoName>
              <LogoSuffix>RIA</LogoSuffix>
              <HelpButton aria-label="help"><Lifebuoy /></HelpButton>
            </Logo>
            <PaneTitle>Menu</PaneTitle>
            <TreePane>
              <TreeView>
                <TreeList>
                  {treeItems.map((item) => (
                    <TreeRow key={item.label}>
                      {item.level === 2 && <Guide />}
                      <Branch $last={item.last}>
                        {item.open && <Expander aria-label="collapse" />}
                      </Branch>
                      <Icon name={item.icon} size={22} />
                      <TreeLink
                        href="#"
                        $selected={item.label === selected}
                        onClick={() => setSelected(item.label)}
                      >
                        {item.label}
                      </TreeLink>
                    </TreeRow>
                  ))}
                </TreeList>
              </TreeView>
              <Scrollbar>
                <Arrow $dir="up" />
                <TrackGap $grow={1} />
                <Thumb $size={36} />
                <Spacer $width={5} />
                <Arrow $dir="down" />
              </Scrollbar>
            </TreePane>
            <Scrollbar $across>
              <Spacer $width={1} />
              <Thumb $across $size={229} />
              <TrackGap $grow={1} />
              <Arrow $dir="right" />
              <Spacer $width={19} />
            </Scrollbar>
            <PaneTitle>Documents</PaneTitle>
            <PaneSplitter />
            <PaneTitle>Raccourcis externes</PaneTitle>
            <EmptyPane />
            <PaneTitle>Console de messages</PaneTitle>
          </Side>
          <Gutter />
          <Main>
            <MainHeader>
              <Icon name="screenAccess" size={33} />
              <MainTitle>Accès aux écrans</MainTitle>
              <SmallButton $wide aria-label="save"><Icon name="save" /></SmallButton>
            </MainHeader>
            <MainScroll>
              <Sections>
                {sections.map((section) => (
                  <Section key={section.title} {...section} />
                ))}
              </Sections>
              <Scrollbar>
                <Arrow $dir="up" />
                <Spacer $width={8} />
                <Thumb $size={116} />
                <TrackGap $grow={1} />
                <Arrow $dir="down" />
              </Scrollbar>
            </MainScroll>
          </Main>
        </Body>

        <StatusBar>
          <LogoutLink href="#">
            <svg width="2" height="12" aria-hidden="true">
              <path d="M0 0H2V5H0ZM0 7H2V11H0Z" fill="#666" />
            </svg>
            Déconnexion [admin]
          </LogoutLink>
          <StatusButtons>
            <StatusButton>Cacher le menu</StatusButton>
            <StatusButton>Afficher mode basculant</StatusButton>
          </StatusButtons>
          <strong>My Own Project'Or RIA</strong>
          <Version>Project'Or RIA V3.1.4</Version>
        </StatusBar>

        <Taskbar>
          <StartButton aria-label="start"><TaskIcon name="start" size={36} /></StartButton>
          <TaskButton $active><TaskIcon name="firefox" />Project'Or RIA ...</TaskButton>
          <FolderGroup>
            <FolderButton><TaskIcon name="folder" />PFE</FolderButton>
            <FolderButton><TaskIcon name="folder" />tool</FolderButton>
            <FolderButton><TaskIcon name="folder" />ESMVISTA</FolderButton>
          </FolderGroup>
          <TaskButton><TaskIcon name="word" />Cahier de char...</TaskButton>
          <TaskButton><TaskIcon name="opera" />Ask questions ...</TaskButton>
          <TaskButton><TaskIcon name="notepad" />C:\wamp\ww...</TaskButton>
          <TaskButton><TaskIcon name="player" />Lecteur Windo...</TaskButton>
          <TaskButton><TaskIcon name="paint" />access to data....</TaskButton>
          <Tray>
            <Language>FR</Language>
            <TrayIcons />
            <Clock>
              22:21
              <br />
              15/04/2013
            </Clock>
            <ShowDesktop aria-label="show desktop" />
          </Tray>
        </Taskbar>
      </Screen>
    </>
  );
};

export default App;
